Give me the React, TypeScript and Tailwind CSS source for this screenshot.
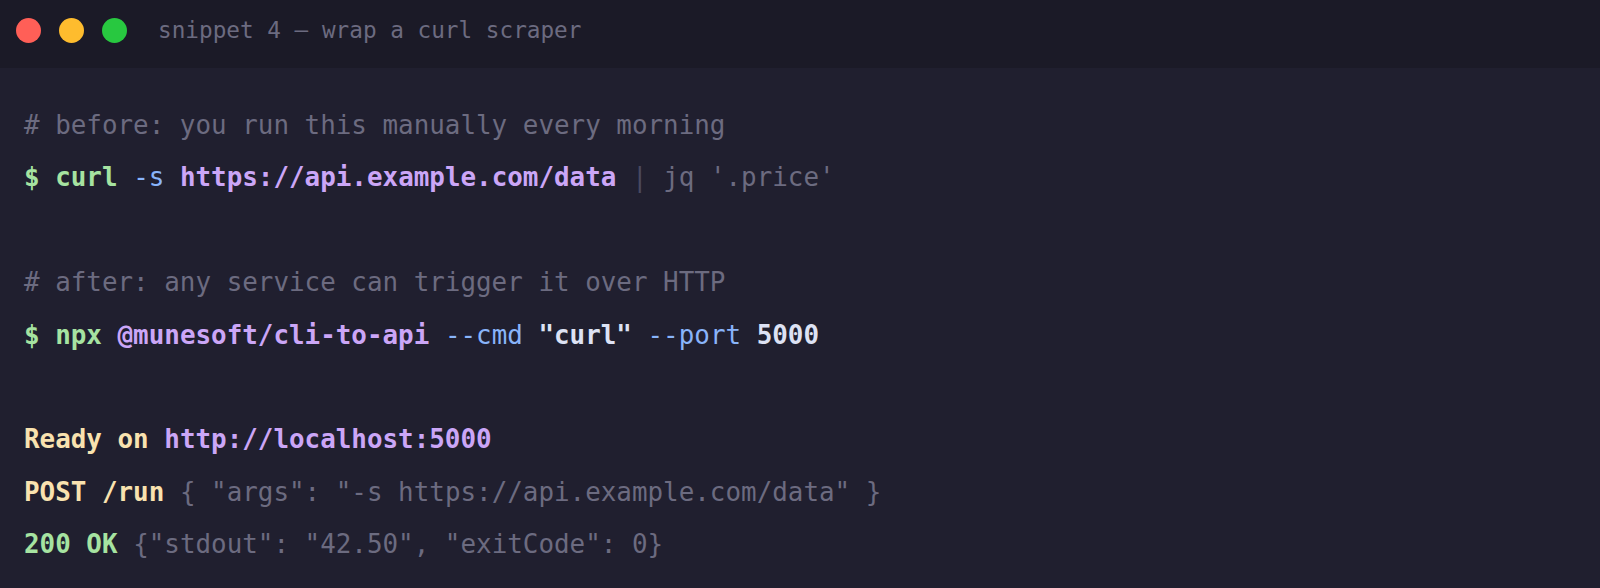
const mono = { fontFamily: '"DejaVu Sans Mono", "Liberation Mono", monospace' };

const Line = ({ children }: { children?: React.ReactNode }) => (
  <div className="h-[52.4px] leading-[52.4px] whitespace-pre">{children}</div>
);

export default function App() {
  return (
    <div className="w-[1600px] h-[588px] bg-[#201f2f] overflow-hidden" style={mono}>
      <div className="h-[68px] bg-[#1b1a27] flex items-center pl-[16px] pb-[7px]">
        <div className="flex gap-[18px]">
          <span className="w-[25px] h-[25px] rounded-full bg-[#ff5f57]" />
          <span className="w-[25px] h-[25px] rounded-full bg-[#febc2e]" />
          <span className="w-[25px] h-[25px] rounded-full bg-[#28c840]" />
        </div>
        <span className="ml-[31px] text-[22.7px] text-[#6c6b80]">snippet 4 — wrap a curl scraper</span>
      </div>

      <div className="pl-[24px] pt-[31px] text-[25.9px] text-[#cdd6f4]">
        <Line>
          <span className="text-[#6c6b80]"># before: you run this manually every morning</span>
        </Line>
        <Line>
          <span className="text-[#a6e3a1] font-bold">$ curl</span>{" "}
          <span className="text-[#89b4fa]">-s</span>{" "}
          <span className="text-[#cba6f7] font-bold">https://api.example.com/data</span>{" "}
          <span className="text-[#4a4960]">|</span>{" "}
          <span className="text-[#6c6b80]">jq '.price'</span>
        </Line>
        <Line />
        <Line>
          <span className="text-[#6c6b80]"># after: any service can trigger it over HTTP</span>
        </Line>
        <Line>
          <span className="text-[#a6e3a1] font-bold">$ npx</span>{" "}
          <span className="text-[#cba6f7] font-bold">@munesoft/cli-to-api</span>{" "}
          <span className="text-[#89b4fa]">--cmd</span>{" "}
          <span className="text-[#dde2f4] font-bold">"curl"</span>{" "}
          <span className="text-[#89b4fa]">--port</span>{" "}
          <span className="text-[#dde2f4] font-bold">5000</span>
        </Line>
        <Line />
        <Line>
          <span className="text-[#f9e2af] font-bold">Ready on</span>{" "}
          <span className="text-[#cba6f7] font-bold">http://localhost:5000</span>
        </Line>
        <Line>
          <span className="text-[#f9e2af] font-bold">POST /run</span>{" "}
          <span className="text-[#6c6b80]">{'{ "args": "-s https://api.example.com/data" }'}</span>
        </Line>
        <Line>
          <span className="text-[#a6e3a1] font-bold">200 OK</span>{" "}
          <span className="text-[#6c6b80]">{'{"stdout": "42.50", "exitCode": 0}'}</span>
        </Line>
      </div>
    </div>
  );
}
